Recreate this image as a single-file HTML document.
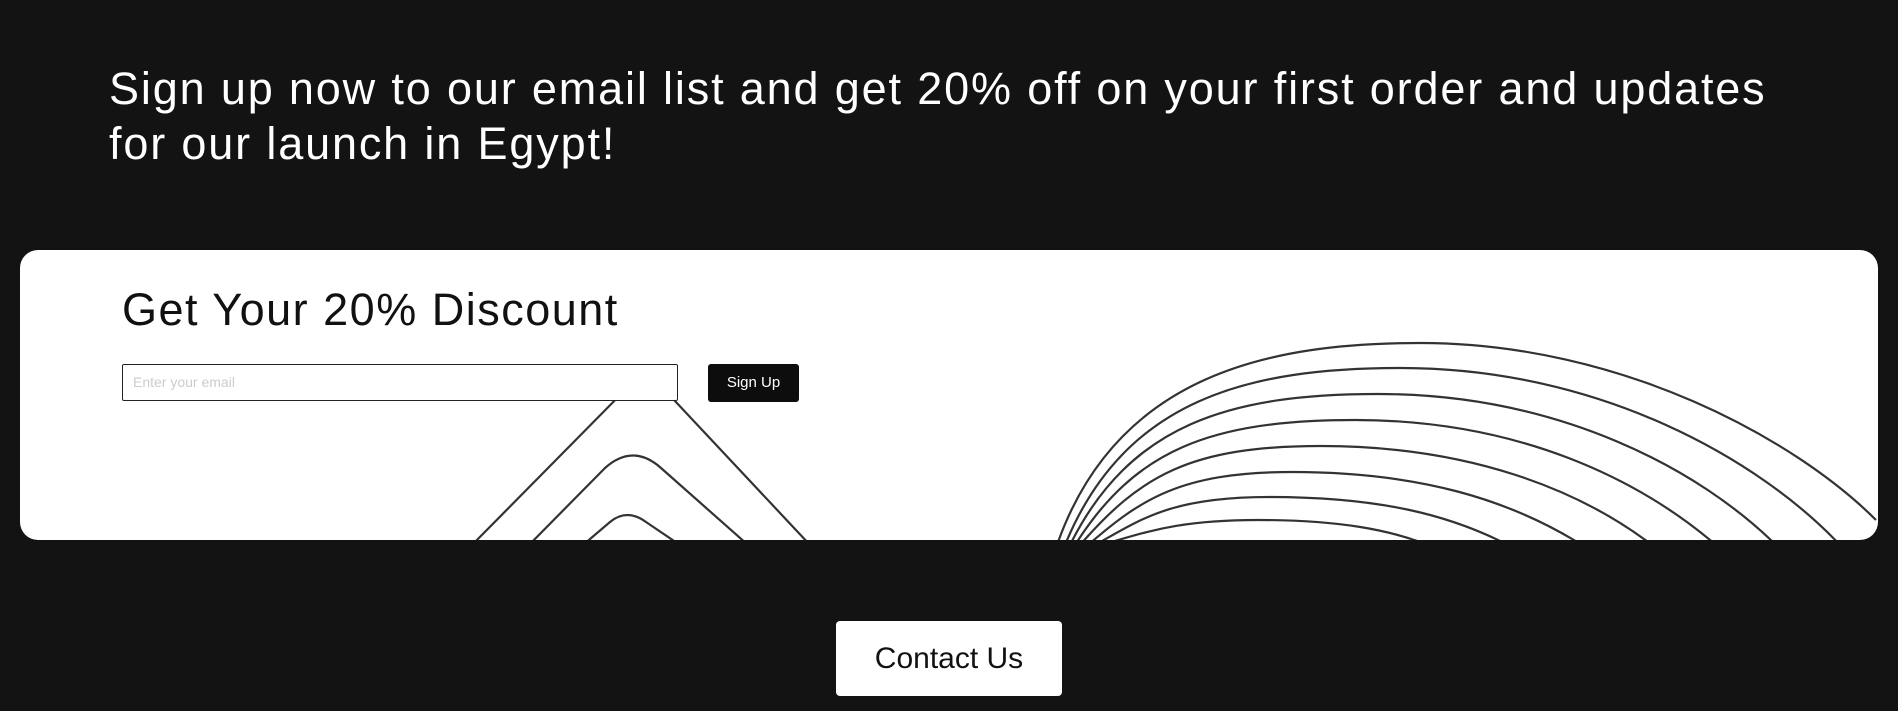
<!DOCTYPE html>
<html><head><meta charset="utf-8"><style>
html,body{margin:0;padding:0;background:#131313;width:1898px;height:711px;overflow:hidden;font-family:"Liberation Sans",sans-serif}
.h{position:absolute;left:109px;top:61px;color:#fff;font-size:45px;line-height:55px;white-space:nowrap;letter-spacing:1.85px}
.card{position:absolute;left:20px;top:250px;width:1858px;height:290px;background:#fff;border-radius:18px;overflow:hidden}
svg{position:absolute;left:0;top:0}
.t{position:absolute;left:102px;top:34px;font-size:45px;color:#111;white-space:nowrap;letter-spacing:1.5px}
.in{position:absolute;left:102px;top:114px;border:1px solid #222;border-radius:2px;background:#fff;font-size:14px;color:#ccc;line-height:35px;padding-left:10px;box-sizing:border-box;width:556px;height:37px}
.btn{position:absolute;left:688px;top:114px;width:91px;height:38px;background:#0d0d0d;border-radius:3px;color:#fff;font-size:15px;line-height:38px;text-align:center}
.c{position:absolute;left:836px;top:621px;width:226px;height:75px;background:#fff;border-radius:4px;font-size:30px;line-height:75px;text-align:center;color:#111}
</style></head><body>
<div class="h">Sign up now to our email list and get 20% off on your first order and updates<br>for our launch in Egypt!</div>
<div class="card">
<svg width="1858" height="290" viewBox="20 250 1858 290" fill="none" stroke="#333" stroke-width="2.2">
<path d="M472 545 L630 385 Q645 372 660 385 L810 545"/>
<path d="M529 545 L605 468 Q633 443 661 468 L748 545"/>
<path d="M583 545 L610 522 Q627 508 646 522 L680 545"/>
<path d="M1057 545 C1117 373 1272 343 1420 343 C1622 343 1796 440 1876 520"/>
<path d="M1065 545 C1125 398 1250 368 1401 368 C1600 368 1760 460 1840 545"/>
<path d="M1070 545 C1130 424 1230 394 1378 394 C1560 394 1700 470 1776 545"/>
<path d="M1075 545 C1135 450 1210 420 1355 420 C1520 420 1640 480 1716 545"/>
<path d="M1080 545 C1140 476 1190 446 1321 446 C1470 446 1580 490 1652 545"/>
<path d="M1088 545 C1140 500 1180 472 1292 472 C1420 472 1510 500 1582 545"/>
<path d="M1095 545 C1140 520 1170 497 1269 497 C1380 497 1450 515 1508 545"/>
<path d="M1100 545 C1140 535 1170 520 1258 520 C1340 520 1390 530 1428 545"/>
</svg>
<div class="t">Get Your 20% Discount</div>
<div class="in">Enter your email</div>
<div class="btn">Sign Up</div>
</div>
<div class="c">Contact Us</div>
</body></html>
